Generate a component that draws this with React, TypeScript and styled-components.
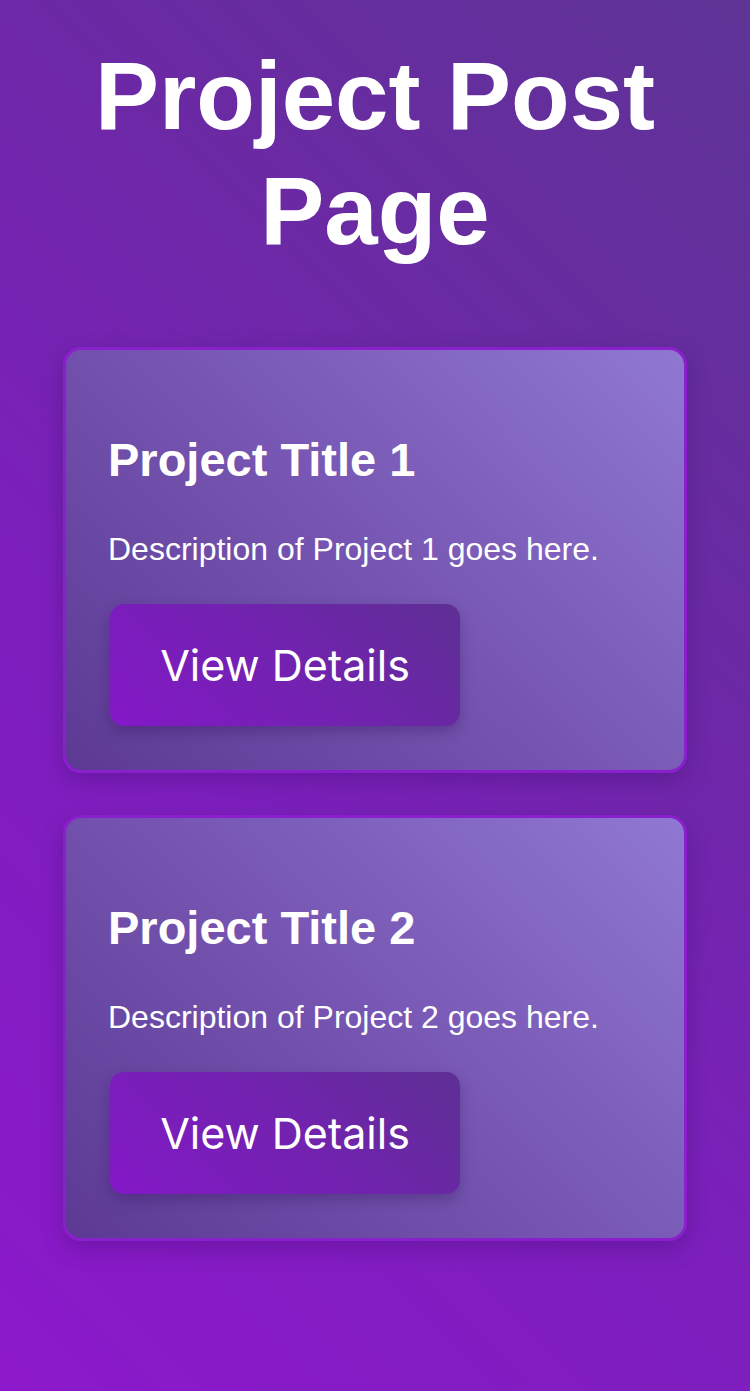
import React from 'react'
import styled, { createGlobalStyle } from 'styled-components'

const GlobalStyle = createGlobalStyle`
    html, body {
        margin: 0;
        padding: 0;
    }
    body {
        min-height: 1391px;
        background: linear-gradient(45deg, #8c19cb 0%, #7c1fbc 40%, #6a2aa3 70%, #5e3496 100%);
        font-family: "Liberation Sans", Arial, sans-serif;
        color: white;
    }
`;

const Page = styled.div`
    min-height: 1391px;
    display: flex;
    flex-direction: column;
    align-items: center;
    padding-top: 38px;
    box-sizing: border-box;
`;

const Heading = styled.h1`
    margin: 0 0 79px;
    width: 600px;
    text-align: center;
    font-size: 96px;
    line-height: 1.2;
    font-weight: 700;
`;

const List = styled.div`
    display: flex;
    flex-direction: column;
    gap: 42px;
    width: 624px;
`;

const Card = styled.div`
    box-sizing: border-box;
    padding: 82px 42px 44px;
    border: 3px solid #8a1fcc;
    border-radius: 18px;
    background: linear-gradient(45deg, #5c3a94 0%, #7656b2 50%, #9078d2 100%);
    box-shadow: 0 8px 22px rgba(40, 0, 80, 0.25);
`;

const Title = styled.h2`
    margin: 0 0 41px;
    font-size: 47px;
    line-height: 1.2;
    font-weight: 700;
`;

const Description = styled.p`
    margin: 0 0 36px;
    font-size: 32px;
    line-height: 1.2;
`;

const Button = styled.button`
    margin-left: 2px;
    width: 350px;
    height: 122px;
    border: none;
    border-radius: 14px;
    background: linear-gradient(45deg, #8418c8 0%, #7222b0 50%, #5e2f94 100%);
    box-shadow: 0 6px 14px rgba(30, 0, 60, 0.25);
    color: white;
    font-family: Inter, "Noto Sans", sans-serif;
    font-size: 43px;
    font-weight: 400;
    cursor: pointer;
`;

const projects = [
    { id: 1, title: 'Project Title 1', description: 'Description of Project 1 goes here.' },
    { id: 2, title: 'Project Title 2', description: 'Description of Project 2 goes here.' },
]

export default function App() {
    return (
        <>
            <GlobalStyle />
            <Page>
                <Heading>Project Post Page</Heading>
                <List>
                    {projects.map(p => (
                        <Card key={p.id}>
                            <Title>{p.title}</Title>
                            <Description>{p.description}</Description>
                            <Button>View Details</Button>
                        </Card>
                    ))}
                </List>
            </Page>
        </>
    )
}
